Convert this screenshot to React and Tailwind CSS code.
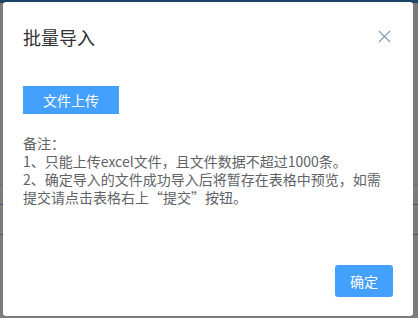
import React from 'react';

const BackgroundPage = () => (
  <div className="absolute inset-0 flex flex-col bg-[#7c7c7c]">
    <div className="h-[3px] bg-[#1c4466]" />
    <div className="h-[24px] border-b border-[#6e6e6e]" />
    <div className="h-[115px] border-b border-[#757575]" />
    <div className="h-[43px] border-b border-[#6e6e6e]" />
    <div className="h-[20px] border-b border-[#2f5d8c]" />
    <div className="h-[30px] border-b border-[#2f5d8c]" />
    <div className="h-[40px] border-b border-[#6e6e6e]" />
  </div>
);

const CloseIcon = () => (
  <svg width="13" height="13" viewBox="0 0 13 13" fill="none">
    <path d="M1 1L12 12M12 1L1 12" stroke="#8a9aad" strokeWidth="1.2" />
  </svg>
);

const App = () => {
  return (
    <div
      className="relative w-[418px] h-[318px] overflow-hidden"
      style={{ fontFamily: '"Noto Sans CJK SC", "Liberation Sans", sans-serif' }}
    >
      <BackgroundPage />

      <div className="absolute left-[3px] top-[2px] w-[410px] h-[314px] bg-white rounded-[3px] flex flex-col px-[20px]">
        <div className="flex items-center justify-between pt-[23px]">
          <h2 className="text-[18px] leading-[24px] text-[#303133] font-normal">批量导入</h2>
          <button className="mr-[2px] mt-[-2px]">
            <CloseIcon />
          </button>
        </div>

        <div className="mt-[37px]">
          <button className="w-[96px] h-[28px] bg-[#43a0fd] text-white text-[14px] leading-[28px]">
            文件上传
          </button>
        </div>

        <div className="mt-[20px] text-[14px] leading-[18px] text-[#606266] pr-[8px]">
          <p>备注：</p>
          <p>1、只能上传excel文件，且文件数据不超过1000条。</p>
          <p>2、确定导入的文件成功导入后将暂存在表格中预览，如需提交请点击表格右上“提交”按钮。</p>
        </div>

        <div className="mt-auto mb-[19px] flex justify-end">
          <button className="w-[58px] h-[32px] bg-[#43a0fd] text-white text-[14px] rounded-[3px]">
            确定
          </button>
        </div>
      </div>
    </div>
  );
};

export default App;
